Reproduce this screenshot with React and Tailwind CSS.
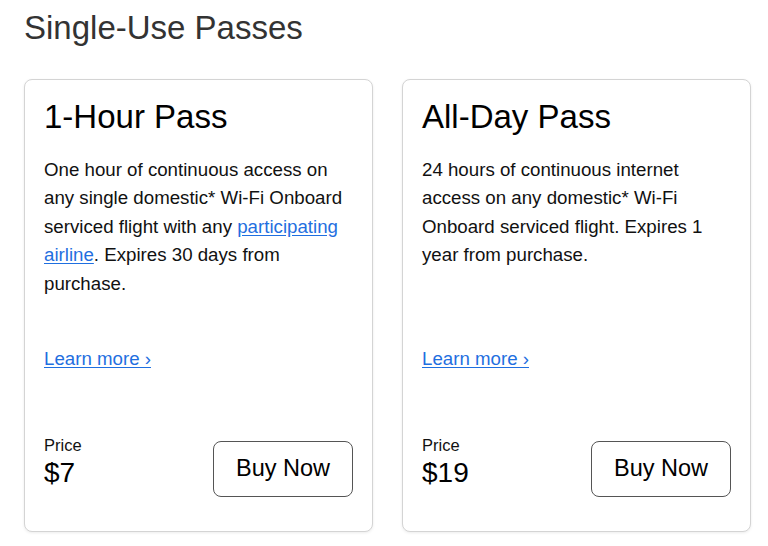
import React from 'react';

const passes = [
  {
    id: 'hour',
    title: '1-Hour Pass',
    price: '$7',
    body: (
      <>
        One hour of continuous access on any single domestic* Wi-Fi Onboard serviced flight with any{' '}
        <a href="#" className="text-[#1f6fe0] underline underline-offset-2">participating airline</a>. Expires 30 days
        from purchase.
      </>
    ),
  },
  {
    id: 'day',
    title: 'All-Day Pass',
    price: '$19',
    body: (
      <>24 hours of continuous internet access on any domestic* Wi-Fi Onboard serviced flight. Expires 1 year from purchase.</>
    ),
  },
];

const PassCard = ({ pass }) => (
  <div className="h-[453px] flex flex-col bg-white border border-[#d4d4d4] rounded-lg shadow-[0_1px_3px_rgba(0,0,0,0.08)] px-[19px] pt-[17px] pb-[34px]">
    <h2 className="text-[33px] leading-[40px] text-black">{pass.title}</h2>
    <p className="mt-[19px] h-[142px] text-[18.7px] leading-[28.4px] text-[#111]">{pass.body}</p>
    <a href="#" className="mt-[47px] self-start text-[18.7px] leading-[28.4px] text-[#1f6fe0] underline underline-offset-2">
      Learn more ›
    </a>
    <div className="mt-auto flex justify-between items-start">
      <div className="flex flex-col">
        <span className="text-[16.5px] leading-[20px] text-[#111]">Price</span>
        <span className="mt-[2px] text-[28px] leading-[32px] text-black">{pass.price}</span>
      </div>
      <button className="mt-[6px] w-[140px] h-[56px] border border-[#555] rounded-lg text-[23.5px] text-black bg-white">
        Buy Now
      </button>
    </div>
  </div>
);

const App = () => {
  return (
    <div className="min-h-[546px] bg-white pt-2 pl-6 font-['Liberation_Sans',Arial,sans-serif]">
      <h1 className="text-[33px] leading-[40px] text-[#333]">Single-Use Passes</h1>
      <div className="mt-[31px] w-[727px] grid grid-cols-2 gap-[29px]">
        {passes.map((p) => (
          <PassCard key={p.id} pass={p} />
        ))}
      </div>
    </div>
  );
};

export default App;
